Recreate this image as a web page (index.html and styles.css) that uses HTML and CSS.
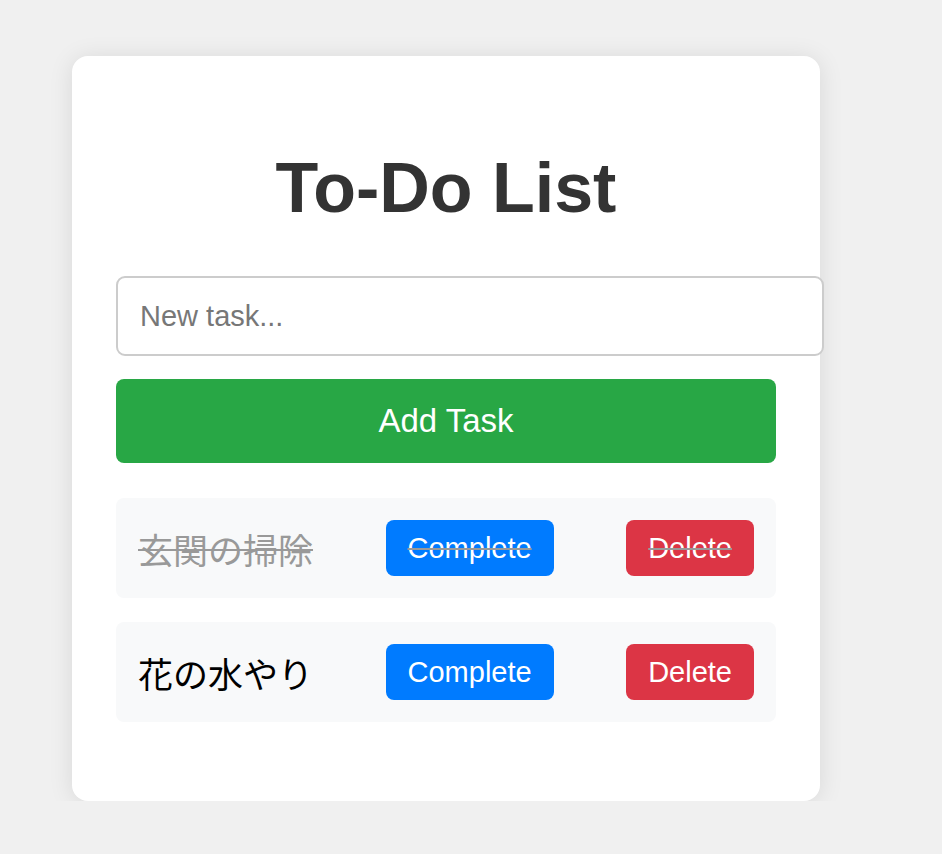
FILE: index.html
```html
<!DOCTYPE html>
<html>

	<head>
		<meta charset="UTF-8">
		<title>To-Do List</title>
		<link rel="stylesheet" href="styles.css">
	</head>

	<body>
		<div class="card">
			<h1>To-Do List</h1>
			<input type="text" class="task-input" placeholder="New task...">
			<button class="add-btn">Add Task</button>

			<ul class="task-list">
				<li class="task done">
					<span class="task-text">玄関の掃除</span>
					<button class="btn complete">Complete</button>
					<button class="btn delete">Delete</button>
				</li>
				<li class="task">
					<span class="task-text">花の水やり</span>
					<button class="btn complete">Complete</button>
					<button class="btn delete">Delete</button>
				</li>
			</ul>
		</div>
	</body>

</html>
```

FILE: styles.css
```css
* {
	margin: 0;
	padding: 0;
}

body {
	background-color: #f0f0f0;
	font-family: "Liberation Sans", Arial, "Noto Sans CJK JP", sans-serif;
	padding: 56px 0 0 72px;
}

.card {
	width: 748px;
	box-sizing: border-box;
	padding: 44px 44px 79px;
	background-color: #fff;
	border-radius: 16px;
	box-shadow: 0 2px 24px rgba(0, 0, 0, 0.1);
}

h1 {
	margin: 48px 0;
	font-size: 70px;
	line-height: 80px;
	font-weight: bold;
	color: #333;
	text-align: center;
}

.task-input {
	display: block;
	width: 100%;
	height: 76px;
	padding: 0 22px;
	border: 2px solid #ccc;
	border-radius: 9px;
	font: 29px "Liberation Sans", Arial, sans-serif;
	color: #333;
	background-color: #fff;
	outline: none;
}

.task-input::placeholder {
	color: #777;
}

.add-btn {
	display: block;
	width: 100%;
	height: 84px;
	margin-top: 23px;
	border: none;
	border-radius: 8px;
	background-color: #28a745;
	color: #fff;
	font: 33px "Liberation Sans", Arial, sans-serif;
}

.task-list {
	list-style: none;
	margin-top: 35px;
	display: flex;
	flex-direction: column;
	gap: 24px;
}

.task {
	display: flex;
	align-items: center;
	justify-content: space-between;
	height: 100px;
	box-sizing: border-box;
	padding: 0 22px;
	background-color: #f8f9fa;
	border-radius: 8px;
}

.task-text {
	font-family: "Noto Sans CJK JP", sans-serif;
	font-size: 35px;
	color: #000;
}

.btn {
	height: 56px;
	padding: 0 22px;
	border: none;
	border-radius: 8px;
	color: #fff;
	font: 29px "Liberation Sans", Arial, sans-serif;
}

.complete {
	background-color: #007bff;
}

.delete {
	background-color: #dc3545;
}

/* 完了したタスク */
.done .task-text {
	color: #999;
	text-decoration: line-through;
	text-decoration-thickness: 2px;
}

.done .btn {
	text-decoration: line-through;
	text-decoration-color: #999;
	text-decoration-thickness: 2px;
}
```
